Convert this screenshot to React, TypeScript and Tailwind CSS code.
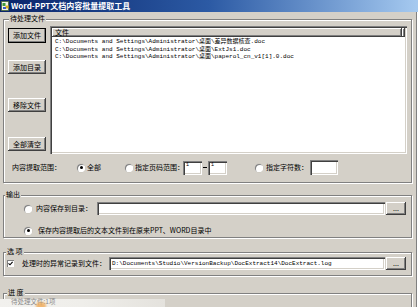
import React from "react";

const cjk = "font-['Noto_Sans_CJK_SC',sans-serif]";
const mono = "font-['Liberation_Mono','Noto_Sans_CJK_SC',monospace]";
const sunken =
  "bg-white shadow-[inset_1px_1px_0_#808080,inset_2px_2px_0_#404040,inset_-1px_-1px_0_#ffffff,inset_-2px_-2px_0_#d4d0c8]";
const raised =
  "bg-[#d4d0c8] shadow-[inset_-1px_-1px_0_#404040,inset_1px_1px_0_#ffffff,inset_-2px_-2px_0_#808080]";

function Radio({ checked }: { checked?: boolean }) {
  return (
    <span className="relative inline-block w-[8px] h-[8px] rounded-full bg-white shadow-[inset_1px_1px_0_#808080,inset_-1px_-1px_0_#ffffff,0_0_0_0.5px_#c8c4bc] shrink-0">
      {checked && (
        <span className="absolute left-[2.5px] top-[2.5px] w-[3px] h-[3px] rounded-full bg-black" />
      )}
    </span>
  );
}

function Btn({ children, cls }: { children: React.ReactNode; cls: string }) {
  return (
    <div
      className={`flex items-center justify-center text-[7px] leading-[7px] text-black ${cjk} ${raised} ${cls}`}
    >
      {children}
    </div>
  );
}

function Group({
  label,
  labelCls,
  cls,
  children,
}: {
  label: string;
  labelCls: string;
  cls: string;
  children?: React.ReactNode;
}) {
  return (
    <div
      className={`relative border border-[#808080] shadow-[inset_1px_1px_0_#ffffff,1px_1px_0_#ffffff] ${cls}`}
    >
      <span
        className={`absolute top-[-5px] bg-[#d4d0c8] px-[1px] text-[7px] leading-[7px] text-black whitespace-pre ${cjk} ${labelCls}`}
      >
        {label}
      </span>
      {children}
    </div>
  );
}

function PathLine({ text }: { text: string }) {
  return (
    <div className={`h-[7.5px] text-[6px] leading-[7.5px] text-black whitespace-pre ${mono}`}>
      {text}
    </div>
  );
}

export default function App() {
  return (
    <div className="relative w-[418px] h-[307px] overflow-hidden bg-[#d4d0c8]">
      {/* title bar */}
      <div className="flex h-[12px] items-center bg-gradient-to-r from-[#0a246a] via-[#2c5aa4] to-[#a6caf0]">
        <svg width="9" height="10" viewBox="0 0 9 10" className="ml-[1px] shrink-0">
          <rect x="0.5" y="0.5" width="7" height="9" fill="#f4f4e8" stroke="#4a6a3a" strokeWidth="0.8" />
          <rect x="1.5" y="2" width="3" height="3" fill="#3c9a3c" />
          <rect x="4.5" y="4.5" width="3" height="3" fill="#e0b020" />
          <rect x="2" y="6" width="3" height="2" fill="#3a5ec8" />
        </svg>
        <span className={`ml-[1px] text-[8px] leading-[10px] font-bold text-white whitespace-pre ${cjk}`}>
          Word-PPT文档内容批量提取工具
        </span>
      </div>

      <div className="flex">
        <div className="ml-[3px] flex w-[409px] flex-col">
          {/* group 1 */}
          <Group label="待处理文件" labelCls="left-[5px]" cls="mt-[7px] h-[164px]">
            <div className="flex pl-[4px] pt-[6px]">
              <div className="flex w-[38px] flex-col">
                <Btn cls="mt-[2px] h-[15px] w-[38px] outline outline-1 outline-black -outline-offset-1">添加文件</Btn>
                <Btn cls="mt-[17px] h-[14px] w-[38px]">添加目录</Btn>
                <Btn cls="mt-[24px] h-[14px] w-[38px]">移除文件</Btn>
                <Btn cls="mt-[25px] h-[14px] w-[38px]">全部清空</Btn>
              </div>
              <div className={`ml-[4px] h-[128px] w-[357px] p-[2px] ${sunken}`}>
                <div className="flex h-[9px]">
                  <div
                    className={`flex h-[9px] w-[350px] items-center pl-[3px] text-[7px] leading-[7px] text-black ${cjk} ${raised}`}
                  >
                    文件
                  </div>
                  <div className={`h-[9px] flex-1 ${raised}`} />
                </div>
                <div className="pl-[3px] pt-[1px]">
                  <PathLine text={"C:\\Documents and Settings\\Administrator\\桌面\\差异数据核查.doc"} />
                  <PathLine text={"C:\\Documents and Settings\\Administrator\\桌面\\ExtJs1.doc"} />
                  <PathLine text={"C:\\Documents and Settings\\Administrator\\桌面\\paperol_cn_v1[1].0.doc"} />
                </div>
              </div>
            </div>
            {/* range row */}
            <div className={`mt-[6px] flex h-[15px] items-center pl-[8px] text-[7px] leading-[7px] text-black ${cjk}`}>
              <span className="w-[65px] whitespace-pre">内容提取范围：</span>
              <Radio checked />
              <span className="ml-[2px] w-[38px]">全部</span>
              <Radio />
              <span className="ml-[2px] w-[48px] whitespace-pre">指定页码范围：</span>
              <div className={`h-[14px] w-[19px] pl-[3px] pt-[2px] text-[5px] leading-[5px] ${mono} ${sunken}`}>1</div>
              <div className="flex w-[6px] justify-center">
                <div className="h-[1px] w-[4px] bg-black" />
              </div>
              <div className={`h-[14px] w-[19px] pl-[3px] pt-[2px] text-[5px] leading-[5px] ${mono} ${sunken}`}>1</div>
              <span className="w-[28px]" />
              <Radio />
              <span className="ml-[3px] w-[44px] whitespace-pre">指定字符数：</span>
              <div className={`h-[15px] w-[28px] ${sunken}`} />
            </div>
          </Group>

          {/* output group */}
          <Group label="输出" labelCls="left-[1px]" cls="mt-[12px] h-[43px]">
            <div className={`flex h-[13px] items-center pl-[20px] mt-[6px] text-[7px] leading-[7px] text-black ${cjk}`}>
              <Radio />
              <span className="ml-[4px] w-[61px] whitespace-pre">内容保存到目录：</span>
              <div className={`h-[13px] w-[288px] ${sunken}`} />
              <Btn cls="ml-[1px] h-[13px] w-[20px] text-[#606060]">...</Btn>
            </div>
            <div className={`mt-[11px] flex h-[9px] items-center pl-[20px] text-[7px] leading-[7px] text-black ${cjk}`}>
              <Radio checked />
              <span className="ml-[6px] whitespace-pre">保存内容提取后的文本文件到在原来PPT、WORD目录中</span>
            </div>
          </Group>

          {/* options group */}
          <Group label="选 项" labelCls="left-[2px]" cls="mt-[14px] h-[24px]">
            <div className={`mt-[4px] flex h-[13px] items-center pl-[3px] text-[7px] leading-[7px] text-black ${cjk}`}>
              <span className="relative h-[7px] w-[7px] shrink-0 bg-white shadow-[inset_1px_1px_0_#808080,inset_-1px_-1px_0_#ffffff]">
                <svg width="7" height="7" viewBox="0 0 7 7" className="absolute left-0 top-0">
                  <path d="M1.5 3.3 L3 4.8 L5.6 1.8" fill="none" stroke="#000" strokeWidth="1.1" />
                </svg>
              </span>
              <span className="ml-[8px] w-[87px] whitespace-pre">处理时的异常记录到文件：</span>
              <div className={`flex h-[13px] w-[276px] items-center pl-[3px] ${sunken}`}>
                <span className={`text-[6px] leading-[6px] text-black whitespace-pre ${mono}`}>
                  D:\Documents\Studio\VersionBackup\DocExtract14\DocExtract.log
                </span>
              </div>
              <Btn cls="ml-[1px] h-[13px] w-[20px] text-[#606060]">...</Btn>
            </div>
          </Group>

          {/* progress group */}
          <Group label="进 度" labelCls="left-[3px]" cls="mt-[17px] h-[30px]" />
        </div>
        <div className="ml-[4px] h-[295px] w-[2px] border-l border-r border-l-[#808080] border-r-white" />
      </div>

      {/* faded status overlay at the bottom */}
      <div className="absolute bottom-0 left-0 h-[8px] w-[165px] bg-gradient-to-r from-[#f2f1ee] via-[#efeeea] to-[#e4e2dd]">
        <span className={`absolute left-[11px] top-[-1px] text-[6.5px] leading-[7px] text-[#8a8a8a] whitespace-pre ${cjk}`}>
          待处理文件:1项
        </span>
        <span className="absolute left-[36px] top-[3px] h-[8px] w-[10px] rounded-full bg-[#f0a040] opacity-70 blur-[1px]" />
      </div>
    </div>
  );
}
